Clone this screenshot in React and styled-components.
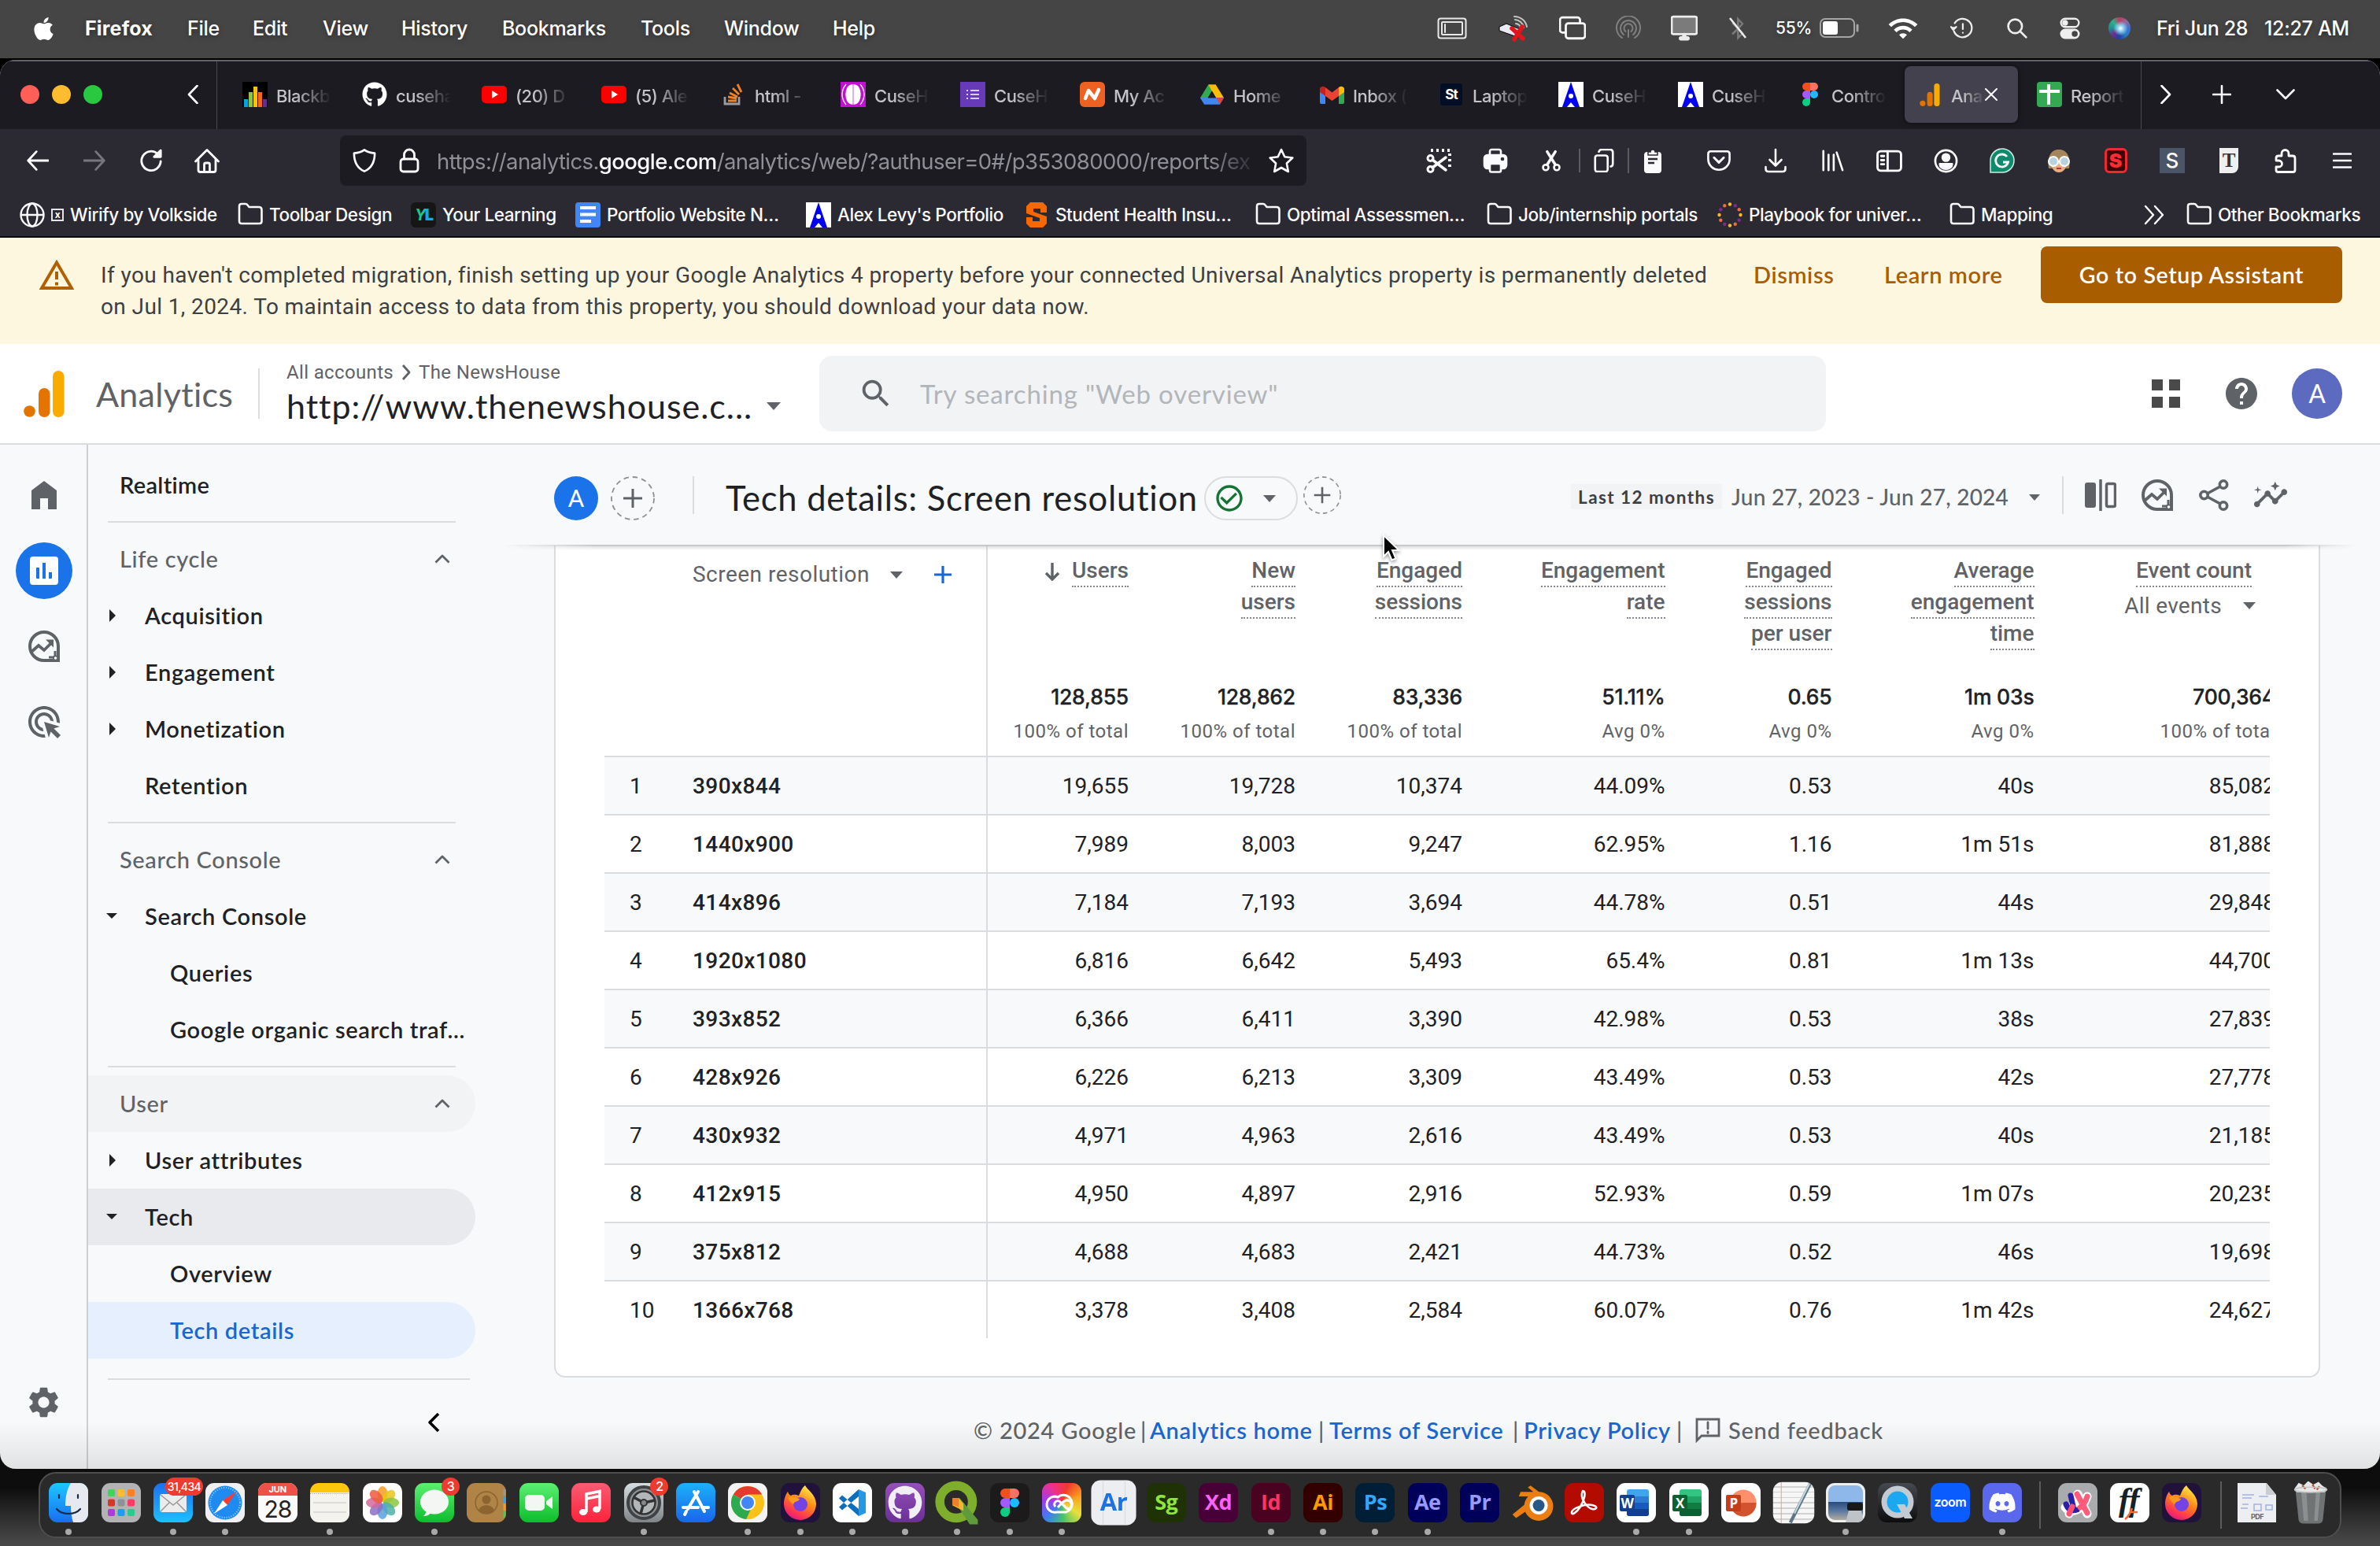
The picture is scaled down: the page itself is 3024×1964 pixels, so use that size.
import React from "react";
import styled, { createGlobalStyle, css } from "styled-components";
import { FaApple, FaGithub, FaDiscord, FaBluetoothB } from "react-icons/fa";
import { MdSearch, MdHelp, MdSettings, MdAdsClick, MdInsights, MdCheckCircleOutline, MdWifi } from "react-icons/md";

const UI = `Inter, "Liberation Sans", sans-serif`;
const GOOGLE = `Lato, "Open Sans", sans-serif`;
const ROBOTO = `Roboto, "Liberation Sans", sans-serif`;

const GlobalStyle = createGlobalStyle`
  * { box-sizing: border-box; }
  body { margin: 0; background: #0b0b0b; font-family: ${ROBOTO}; overflow: hidden; }
  svg { display: block; flex: none; }
`;

/* ---------- shell ---------- */
const Screen = styled.div`
  position: relative;
  width: 3024px;
  height: 1964px;
  display: flex;
  flex-direction: column;
  background: linear-gradient(#000 0, #000 90px, #0d0d0d 1890px, #2c2c2c 1925px, #484848 1960px);
  overflow: hidden;
`;
const Browser = styled.div`
  height: 1790px;
  flex: none;
  display: flex;
  flex-direction: column;
  border-radius: 20px;
  overflow: hidden;
  background: #f8f9fb;
  position: relative;
  &::after {
    content: "";
    position: absolute;
    inset: auto 0 0 0;
    height: 60px;
    background: linear-gradient(transparent, rgba(60, 70, 60, 0.13));
    pointer-events: none;
  }
`;
const Row = styled.div`
  display: flex;
  align-items: center;
  gap: ${(p) => p.$gap || 0}px;
`;
const Spacer = styled.div`
  flex: ${(p) => (p.$w ? "none" : 1)};
  width: ${(p) => p.$w || 0}px;
`;

/* ---------- mac menu bar ---------- */
const MenuBar = styled.header`
  height: 76px;
  flex: none;
  display: flex;
  align-items: center;
  padding: 0 33px 2px 39px;
  background: #454545;
  border-bottom: 2px solid #000;
  color: #fff;
  font: 500 25px/30px ${UI};
  letter-spacing: -0.3px;
  text-shadow: 0 2px 6px rgba(0, 0, 0, 0.35);
`;
const MenuItem = styled.span`
  flex: none;
  width: ${(p) => p.$w}px;
  white-space: nowrap;
  font-weight: ${(p) => (p.$bold ? 700 : 500)};
  letter-spacing: ${(p) => (p.$bold ? 0.2 : -0.3)}px;
`;
const StatusSlot = styled.span`
  flex: none;
  width: ${(p) => p.$w}px;
  display: flex;
  justify-content: center;
`;
const BatteryText = styled.span`
  font-size: 21px;
  width: 56px;
  letter-spacing: -0.2px;
`;
const Siri = styled.span`
  width: 28px;
  height: 28px;
  border-radius: 50%;
  background: radial-gradient(circle at 55% 50%, #fff 0, #8fd0f0 18%, transparent 45%),
    conic-gradient(#c03a62, #8f6aa0, #3b6fd8, #2a7fc0, #2340a0, #6a2f90, #1f8f90, #2fae8c, #c03a62);
`;

const MENU = [["Firefox", 130, true], ["File", 83], ["Edit", 89], ["View", 100], ["History", 128], ["Bookmarks", 176], ["Tools", 106], ["Window", 138], ["Help", 60]];

const Glyph = ({ s = 32, w, h, vb = "0 0 32 32", c = "#fbfbfe", sw = 2.6, fill = "none", children }) => (
  <svg width={w || s} height={h || s} viewBox={vb} fill={fill} stroke={c} strokeWidth={sw} strokeLinecap="round" strokeLinejoin="round">{children}</svg>
);

function MacMenu() {
  return (
    <MenuBar>
      <FaApple size={33} color="#fff" />
      <Spacer $w={36} />
      {MENU.map(([t, w, b]) => <MenuItem key={t} $w={w} $bold={b}>{t}</MenuItem>)}
      <Spacer />
      <StatusSlot $w={76}>
        <Glyph w={38} h={28} vb="0 0 38 28" c="#e8e8e8" sw={2}>
          <rect x="1.5" y="1.500" width="35" height="25" rx="3" /><rect x="6" y="6" width="26" height="16" rx="1" /><path d="M10 9v10" />
        </Glyph>
      </StatusSlot>
      <StatusSlot $w={80}>
        <Glyph s={38} vb="0 0 38 34" c="#ddd" sw={2}>
          <path d="M1 15l9-4 17 7-2 11-7-3-17-6z" fill="#e8eaf4" stroke="#111" strokeWidth="1.200" />
          <path d="M22 11a7 7 0 0 1 6 5M21 6a12 12 0 0 1 11 10M20 2a16 16 0 0 1 16 13" stroke="#c4c4c4" />
          <path d="M17 17l14 13M30 15L20 31" stroke="#e0161c" strokeWidth="5.500" />
        </Glyph>
      </StatusSlot>
      <StatusSlot $w={70}>
        <Glyph s={34} sw={2.6}><path d="M8 21H4a3 3 0 0 1-3-3V6a3 3 0 0 1 3-3h18a3 3 0 0 1 3 3v3" /><rect x="8" y="10" width="23" height="18" rx="3" /></Glyph>
      </StatusSlot>
      <StatusSlot $w={72}>
        <Glyph s={32} c="#7f7f7f" sw={2}><path d="M8 28a15 15 0 1 1 16 0M10 24a10 10 0 1 1 12 0M12.500 20a5.500 5.500 0 1 1 7 0M16 18v9" /></Glyph>
      </StatusSlot>
      <StatusSlot $w={70}>
        <Glyph s={34} sw={2.6} c="#ececec"><rect x="1" y="2" width="30" height="21" rx="2" fill="#7b7b7b" /><path d="M12 28h8M16 24v4" strokeWidth="5" /></Glyph>
      </StatusSlot>
      <StatusSlot $w={66}>
        <svg width="26" height="32" viewBox="0 0 26 32"><FaBluetoothB size={30} x={-2} y={1} color="#7b7b7b" /><path d="M3 3l20 25" stroke="#eee" strokeWidth="2.500" /></svg>
      </StatusSlot>
      <Spacer $w={15} />
      <BatteryText>55%</BatteryText>
      <Glyph w={50} h={26} vb="0 0 50 26" c="#a5a5a5" sw={2}>
        <rect x="1" y="1" width="43" height="23" rx="6" /><rect x="4" y="4" width="19" height="17" rx="3" fill="#fff" stroke="none" /><path d="M48 9v7" strokeWidth="3" />
      </Glyph>
      <StatusSlot $w={112}><MdWifi size={40} color="#fff" /></StatusSlot>
      <StatusSlot $w={38}>
        <Glyph s={30} sw={2.4} c="#eee"><path d="M5 20A12.500 12.500 0 1 0 6 9" /><path d="M1 14l3 4 4-4" fill="#eee" /><path d="M17 10v7M17 22v0" /></Glyph>
      </StatusSlot>
      <StatusSlot $w={102}>
        <Glyph s={28} sw={3} c="#eee"><circle cx="13" cy="13" r="10" /><path d="M20 20l9 9" /></Glyph>
      </StatusSlot>
      <StatusSlot $w={32}>
        <Glyph s={28} sw={2.6} c="#eee"><rect x="3" y="2" width="26" height="12" rx="6" /><circle cx="9" cy="8" r="3" fill="#eee" /><rect x="3" y="18" width="26" height="12" rx="6" fill="#eee" /><circle cx="23" cy="24" r="3" fill="#444" stroke="#444" /></Glyph>
      </StatusSlot>
      <StatusSlot $w={94}><Siri /></StatusSlot>
      <MenuItem $w={137}>Fri Jun 28</MenuItem>
      <MenuItem $w={114}>12:27 AM</MenuItem>
    </MenuBar>
  );
}

/* ---------- tab strip ---------- */
const TabStrip = styled.div`
  height: 88px;
  flex: none;
  display: flex;
  align-items: center;
  background: #1c1b22;
  border-top: 2px solid #62626a;
  padding-bottom: 2px;
`;
const Light = styled.span`
  width: 24px;
  height: 24px;
  border-radius: 50%;
  background: ${(p) => p.$c};
`;
const Lights = styled(Row)`
  width: 212px;
  padding-left: 26px;
`;
const TabRule = styled.span`
  width: 1px;
  align-self: stretch;
  margin-bottom: -2px;
  background: #4a4950;
`;
const Tab = styled.div`
  width: 144px;
  height: 72px;
  margin: 0 4px;
  padding-left: 16px;
  display: flex;
  align-items: center;
  border-radius: 8px;
  flex: none;
  ${(p) => p.$active && css`
    background: #42414d;
    box-shadow: 0 0 6px rgba(0, 0, 0, 0.6);
  `}
`;
const TabText = styled.span`
  width: ${(p) => p.$w || 70}px;
  margin-left: 11px;
  padding-top: 4px;
  overflow: hidden;
  white-space: nowrap;
  font: 500 22px/32px ${UI};
  letter-spacing: -0.5px;
  color: #c4c4c8;
  mask-image: linear-gradient(90deg, #000 35%, transparent 100%);
`;
const Fav = styled.span`
  width: 32px;
  height: 32px;
  flex: none;
  display: flex;
  align-items: center;
  justify-content: center;
  background: ${(p) => p.$bg || "none"};
  border-radius: ${(p) => p.$r || 0}px;
  color: ${(p) => p.$c || "#fff"};
  font: 700 ${(p) => p.$fs || 16}px/32px ${UI};
`;
const StBox = styled(Fav)`
  width: 28px;
  height: 28px;
  letter-spacing: -1px;
`;
const YlText = styled.span`
  letter-spacing: -2px;
  font-style: italic;
  b { font-style: normal; color: #12a9e8; }
`;

const AMark = () => (
  <Fav $bg="#fff">
    <svg width="32" height="32" viewBox="0 0 32 32"><path d="M16 0L27 32h-6l-5-6-5 6H5z" fill="#0000f5" /><circle cx="16" cy="18" r="3" fill="#fff" /></svg>
  </Fav>
);
const YouTube = () => (
  <svg width="32" height="32" viewBox="0 0 32 32"><rect y="5" width="32" height="22" rx="5" fill="#f00" /><path d="M13 11l8 5-8 5z" fill="#fff" /></svg>
);
const GaMark = ({ w, h }) => (
  <svg width={w} height={h} viewBox="0 0 52 59">
    <circle cx="7.500" cy="51.500" r="7.300" fill="#e37400" /><rect x="19" y="22" width="14.500" height="37" rx="7.250" fill="#e37400" /><rect x="37" y="0" width="14.500" height="59" rx="7.250" fill="#f9ab00" />
  </svg>
);
const FigmaMark = ({ w, h }) => (
  <svg width={w} height={h} viewBox="0 0 20 30">
    <path d="M5 0h5v10H5A5 5 0 0 1 5 0z" fill="#f24e1e" /><path d="M10 0h5a5 5 0 0 1 0 10h-5z" fill="#ff7262" /><path d="M5 10h5v10H5a5 5 0 0 1 0-10z" fill="#a259ff" /><circle cx="15" cy="15" r="5" fill="#1abcfe" /><path d="M5 20h5v5a5 5 0 1 1-5-5z" fill="#0acf83" />
  </svg>
);

const TABS = [
  ["Blackb", <Fav $bg="#000" key="a"><svg width="32" height="32" viewBox="0 0 32 32"><rect x="2" y="22" width="5" height="10" fill="#00a4e4" /><rect x="8" y="13" width="5" height="19" fill="#8cc63f" /><rect x="14" y="6" width="5" height="26" fill="#fdc010" /><rect x="20" y="13" width="5" height="19" fill="#f26522" /><rect x="26" y="22" width="5" height="10" fill="#662d91" /></svg></Fav>],
  ["cuseha", <Fav key="a"><FaGithub size={32} /></Fav>],
  ["(20) D", <YouTube key="a" />],
  ["(5) Ale", <YouTube key="a" />],
  ["html -", <Fav key="a" $c="#f48024"><svg width="26" height="28" viewBox="0 0 26 28" strokeWidth="2.800" fill="none"><path d="M2 17v9h18v-9" stroke="#9c9ca0" /><path d="M6 22h11M6 17l11 2M8 12l10 5M12 6l8 8M18 1l5 10" stroke="#f48024" /></svg></Fav>],
  ["CuseH", <Fav key="a" $bg="#c30fd4"><svg width="32" height="32" viewBox="0 0 32 32" fill="none" stroke="#fff" strokeWidth="1.300"><path d="M15 4c-5 0-8 5-8 12s3 12 8 12zM17 4c5 0 8 5 8 12s-3 12-8 12z" fill="#fff" /><path d="M7 3C3 8 2 12 2 16s1 8 5 13M25 3c4 5 5 9 5 13s-1 8-5 13" /></svg></Fav>],
  ["CuseH", <Fav key="a" $bg="#673ab7"><svg width="16" height="14" viewBox="0 0 16 14" stroke="#fff" strokeWidth="1.600"><path d="M0 2h2M0 7h2M0 12h2M5 2h11M5 7h11M5 12h11" /></svg></Fav>],
  ["My Ac", <Fav key="a" $bg="#ee6123" $r={6}><svg width="24" height="18" viewBox="0 0 24 18" fill="none" stroke="#fff" strokeWidth="4.500" strokeLinecap="round" strokeLinejoin="round"><path d="M3 14L7 4l8 10 5-11" /></svg></Fav>],
  ["Home", <Fav key="a"><svg width="30" height="27" viewBox="0 0 32 28"><path d="M11 0h10L5.500 26 0 18z" fill="#34a853" /><path d="M11 0h10l11 18H21z" fill="#fbbc04" /><path d="M0 18h32l-5.500 9h-21z" fill="#4285f4" /><path d="M22 18h10l-5.500 9z" fill="#ea4335" /><path d="M16 9l-5.500 9h11z" fill="#1c1b22" /></svg></Fav>],
  ["Inbox (", <Fav key="a"><svg width="31" height="23" viewBox="0 0 31 23"><path d="M0 3v18q0 2 2 2h5V8z" fill="#4285f4" /><path d="M31 3v18q0 2-2 2h-5V8z" fill="#34a853" /><path d="M24 2q4-3 7 1v5l-7 5z" fill="#fbbc04" /><path d="M7 2q-4-3-7 1v5l7 5z" fill="#c5221f" /><path d="M7 2l8.500 6.500L24 2v11l-8.500 6L7 13z" fill="#ea4335" /></svg></Fav>],
  ["Laptop", <Fav key="a"><StBox $bg="#010f26" $r={4} $fs={17}>St</StBox></Fav>],
  ["CuseH", <AMark key="a" />],
  ["CuseH", <AMark key="a" />],
  ["Contro", <Fav key="a"><FigmaMark w={20} h={30} /></Fav>],
  ["Ana", <Fav key="a"><GaMark w={26} h={29} /></Fav>],
  ["Report", <Fav key="a" $bg="#34a853" $r={4}><svg width="26" height="28" viewBox="0 0 26 28" stroke="#fff" strokeWidth="4"><path d="M0 10h26M12 1v26" /></svg></Fav>],
];

function Tabs() {
  return (
    <TabStrip>
      <Lights $gap={16}><Light $c="#ff5f57" /><Light $c="#febc2e" /><Light $c="#28c840" /></Lights>
      <Spacer $w={26} />
      <Glyph w={14} h={24} vb="0 0 14 24"><path d="M12.500 1L2 12l10.500 11" /></Glyph>
      <Spacer $w={23} />
      <TabRule />
      <Spacer $w={12} />
      {TABS.map(([t, icon], i) => (
        <Tab key={i} $active={t === "Ana"}>
          {icon}
          <TabText $w={t === "Ana" ? 43 : 70}>{t}</TabText>
          {t === "Ana" && <Glyph s={16} vb="0 0 16 16" sw={2}><path d="M1 1l14 14M15 1L1 15" /></Glyph>}
        </Tab>
      ))}
      <TabRule />
      <Spacer $w={24} />
      <Glyph w={14} h={24} vb="0 0 14 24"><path d="M1.500 1L12 12 1.500 23" /></Glyph>
      <Spacer $w={52} />
      <Glyph s={24} vb="0 0 24 24"><path d="M12 1v22M1 12h22" /></Glyph>
      <Spacer $w={57} />
      <Glyph w={24} h={14} vb="0 0 24 14"><path d="M1.500 1.500L12 12 22.500 1.500" /></Glyph>
    </TabStrip>
  );
}

/* ---------- navigation toolbar ---------- */
const Toolbar = styled.div`
  height: 80px;
  flex: none;
  display: flex;
  align-items: center;
  padding-left: 12px;
  background: #2b2a33;
`;
const ToolSlot = styled.span`
  width: ${(p) => p.$w || 72}px;
  flex: none;
  display: flex;
  justify-content: center;
  ${(p) => p.$rule && css`border-left: 2px solid #5b5a63;`}
`;
const UrlBox = styled.div`
  width: 1228px;
  height: 64px;
  display: flex;
  align-items: center;
  flex: none;
  border-radius: 8px;
  background: #1c1b22;
  padding: 0 16px;
`;
const UrlText = styled.span`
  flex: 1;
  margin: 0 12px 0 22px;
  padding-top: 2px;
  overflow: hidden;
  white-space: nowrap;
  font: 400 27.500px/40px ${UI};
  letter-spacing: -0.58px;
  color: #8f8f96;
  mask-image: linear-gradient(90deg, #000 94%, transparent 100%);
  b { color: #fbfbfe; font-weight: 500; }
`;
const Square = styled.span`
  width: ${(p) => p.$w || 32}px;
  height: 32px;
  display: flex;
  align-items: center;
  justify-content: center;
  background: ${(p) => p.$bg};
  border: ${(p) => p.$bd || "none"};
  border-radius: ${(p) => p.$r || 0};
  color: ${(p) => p.$c};
  font: ${(p) => p.$font};
`;

function NavBar() {
  return (
    <Toolbar>
      <ToolSlot><Glyph s={28} sw={3.2}><path d="M31 16H2M14 3L2 16l12 13" /></Glyph></ToolSlot>
      <ToolSlot><Glyph s={28} sw={3.2} c="#77767d"><path d="M1 16h29M18 3l12 13-12 13" /></Glyph></ToolSlot>
      <ToolSlot><Glyph s={30} sw={3}><path d="M29 17a13 13 0 1 1-4-10" /><path d="M29 2v9h-9z" fill="#fbfbfe" /></Glyph></ToolSlot>
      <ToolSlot $w={70}><Glyph s={32} sw={2.8}><path d="M1.500 17L16 2.500 30.500 17M5 14v14q0 2.500 2.500 2.500h17Q27 30.500 27 28V14M12.500 30V21q0-2 2-2h3q2 0 2 2v9" /></Glyph></ToolSlot>
      <Spacer $w={134} />
      <UrlBox>
        <Glyph w={30} h={32} sw={2.800}><path d="M16 1.500c4 3 8 4 14 4.500 0 11-4 20-14 24.500C6 26 2 17 2 6c6-.5 10-1.500 14-4.500z" /></Glyph>
        <Spacer $w={29} />
        <Glyph w={26} h={32} vb="0 0 26 32" sw={2.800}><rect x="2" y="14" width="22" height="16" rx="3.500" /><path d="M6.500 14V8.500a6.500 6.500 0 0 1 13 0V14" /></Glyph>
        <UrlText>https://analytics.<b>google.com</b>/analytics/web/?authuser=0#/p353080000/reports/ex</UrlText>
        <Glyph s={32} sw={2.600}><path d="M16 2l4.300 9.200 10 1.300-7.400 7 1.900 10.500-8.800-5-8.800 5L9.100 19.500l-7.400-7 10-1.300z" /></Glyph>
      </UrlBox>
      <Spacer $w={132} />
      <ToolSlot><Glyph s={32} sw={3}><path d="M6 3h24v24" strokeDasharray="3 4" strokeLinecap="butt" strokeWidth="4" /><circle cx="5.500" cy="13" r="3.500" /><circle cx="5.500" cy="27" r="3.500" /><path d="M8 15l17 13M8 25L25 12" strokeWidth="3.500" /></Glyph></ToolSlot>
      <ToolSlot><Glyph s={32} sw={2.600}><rect x="2" y="9" width="28" height="17" rx="4" fill="#fbfbfe" /><path d="M9 9V4.500Q9 2 11.500 2h9Q23 2 23 4.500V9" /><rect x="9" y="20" width="14" height="10.500" rx="2" fill="#2b2a33" /><circle cx="25" cy="14" r="1" stroke="#2b2a33" /></Glyph></ToolSlot>
      <ToolSlot $w={70}><Glyph s={28} sw={3}><circle cx="8" cy="26" r="4" /><circle cx="24" cy="26" r="4" /><path d="M10 22L22 3M22 22L10 3" strokeWidth="4" /></Glyph></ToolSlot>
      <ToolSlot $w={62} $rule><Glyph s={30} sw={2.800}><rect x="4" y="9" width="17" height="22" rx="3" /><path d="M9 4q1-3 4-3h11q4 0 4 4v15q0 4-3 4" /></Glyph></ToolSlot>
      <ToolSlot $w={62} $rule><svg width="24" height="32" viewBox="0 0 24 32"><rect x="1" y="5" width="22" height="27" rx="4" fill="#fbfbfe" /><path d="M6 9V5h3a3 3 0 0 1 6 0h3v4z" fill="#fbfbfe" stroke="#2b2a33" strokeWidth="1.500" /><path d="M6 14h12M6 19h8" stroke="#2b2a33" strokeWidth="2.500" /></svg></ToolSlot>
      <Spacer $w={18} />
      <ToolSlot><Glyph s={30} sw={2.800}><path d="M5 3.500h22q3.500 0 3.500 3.500v7a14.500 14.500 0 0 1-29 0V7Q1.500 3.500 5 3.500z" /><path d="M9.500 12l6.500 6.500 6.500-6.500" strokeWidth="3.200" /></Glyph></ToolSlot>
      <ToolSlot><Glyph s={32}><path d="M16 2v20M8.500 15l7.500 7.500 7.500-7.500M3.500 24v2.500q0 3.500 3.500 3.500h18q3.500 0 3.500-3.500V24" /></Glyph></ToolSlot>
      <ToolSlot><Glyph s={30} sw={2.800}><path d="M4 3v26M11 8v21M18 8v21M22 5l8 24" /></Glyph></ToolSlot>
      <ToolSlot><Glyph s={33} sw={2.800}><rect x="1.500" y="4" width="29" height="24" rx="4" /><path d="M14 4v24M6 10h3.500M6 15h3.500M6 20h3.500" /></Glyph></ToolSlot>
      <ToolSlot><Glyph s={31} sw={2.800}><circle cx="16" cy="16" r="14" /><circle cx="16" cy="11.500" r="4.500" fill="#fbfbfe" /><path d="M8 20h16c0 4-3.500 6.500-8 6.500S8 24 8 20z" fill="#fbfbfe" /></Glyph></ToolSlot>
      <ToolSlot><svg width="32" height="32" viewBox="0 0 32 32"><path d="M16 1a15 15 0 1 1 0 30H1V16A15 15 0 0 1 16 1z" fill="#0f8a6c" stroke="#cfeee5" strokeWidth="1.500" /><path d="M22 11a8 8 0 1 0 1.500 7H17" fill="none" stroke="#fff" strokeWidth="2.800" /></svg></ToolSlot>
      <ToolSlot><svg width="32" height="32" viewBox="0 0 32 32"><path d="M3 26c-2-14 2-24 13-24s15 10 13 24z" fill="#a5855c" /><ellipse cx="16" cy="19" rx="10" ry="12" fill="#e8ab84" /><path d="M4 15C6 6 12 8 19 6c5 1 8 5 9 9z" fill="#a5855c" /><circle cx="9" cy="17" r="6" fill="#b9d3dc" stroke="#fff" strokeWidth="2" /><circle cx="23" cy="17" r="6" fill="#b9d3dc" stroke="#fff" strokeWidth="2" /><path d="M13 26h6" stroke="#b03a3a" strokeWidth="2" /></svg></ToolSlot>
      <ToolSlot><Square $w={29} $bg="#3d0205" $bd="3px solid #ee2a30" $r="6px" $c="#ff2d33" $font={`900 25px/26px ${UI}`}>S</Square></ToolSlot>
      <ToolSlot><Square $bg="#4b5568" $c="#fff" $font={`500 26px/32px ${UI}`}>S</Square></ToolSlot>
      <ToolSlot><Square $w={24} $bg="#efefef" $r="0 0 8px 0" $c="#333" $font={`700 25px/32px "Liberation Serif", serif`}>T</Square></ToolSlot>
      <ToolSlot><Glyph s={32} sw={2.800}><path d="M4 16V13q0-3 3-3h4V7a4.500 4.500 0 0 1 9 0v3h5q3 0 3 3v15q0 2.500-2.500 2.500H6.500Q4 30.500 4 28v-4h3.500a4 4 0 0 0 0-8z" /></Glyph></ToolSlot>
      <ToolSlot><Glyph s={24} vb="0 0 24 24"><path d="M1 3.500h22M1 12h22M1 20.500h22" /></Glyph></ToolSlot>
    </Toolbar>
  );
}

/* ---------- bookmarks ---------- */
const BookmarkBar = styled.div`
  height: 58px;
  flex: none;
  display: flex;
  align-items: flex-start;
  padding: 13px 0 0 25px;
  background: #2b2a33;
  border-bottom: 2px solid #0c0c0d;
`;
const Bookmark = styled.div`
  width: ${(p) => p.$w}px;
  flex: none;
  display: flex;
  align-items: center;
  gap: 8px;
  white-space: nowrap;
  color: #fbfbfe;
  font: 500 22.500px/32px ${UI};
  letter-spacing: -0.42px;
`;
const Folder = () => (
  <Glyph s={32} sw={2.600}><path d="M2 5q0-3 3-3h5q1.500 0 2.500 1.500L14.500 6H27q3.500 0 3.500 3.500V24q0 3-3 3H5q-3 0-3-3z" /></Glyph>
);
const BoxX = styled.span`
  width: 16px;
  height: 16px;
  border: 2px solid #e4e4e8;
  font: 700 12px/11px ${UI};
  text-align: center;
`;
const BOOKMARKS = [
  [277, "Wirify by Volkside", <Glyph key="i" s={32} sw={2.400}><circle cx="16" cy="16" r="14.500" /><ellipse cx="16" cy="16" rx="6.500" ry="14.500" /><path d="M2 16h28" /></Glyph>, true],
  [220, "Toolbar Design", <Folder key="i" />],
  [209, "Your Learning", <Fav key="i" $bg="#161616" $r={6} $c="#14c98f" $fs={20}><YlText>Y<b>L</b></YlText></Fav>],
  [293, "Portfolio Website N…", <Fav key="i" $bg="#4285f4" $r={4}><svg width="20" height="22" viewBox="0 0 20 22" stroke="#fff" strokeWidth="4"><path d="M0 2h20M0 10.500h20M0 19h14" /></svg></Fav>],
  [277, "Alex Levy's Portfolio", <AMark key="i" />],
  [294, "Student Health Insu…", <Fav key="i"><svg width="26" height="32" viewBox="0 0 26 32"><path d="M5 0h16l5 5v8h-8V8H9v4l17 6v9l-5 5H5l-5-5v-8h8v5h9v-4L0 14V5z" fill="#f76900" /></svg></Fav>],
  [294, "Optimal Assessmen…", <Folder key="i" />],
  [293, "Job/internship portals", <Folder key="i" />],
  [295, "Playbook for univer…", <svg key="i" width="32" height="32" viewBox="0 0 32 32">{[...Array(12)].map((_, k) => <circle key={k} cx={16 + 13.500 * Math.sin((k * Math.PI) / 6)} cy={16 - 13.500 * Math.cos((k * Math.PI) / 6)} r="2.200" fill={["#fdb827", "#7b2d8b", "#f26a3d"][k % 3]} />)}</svg>],
  [245, "Mapping", <Folder key="i" />],
];
function Bookmarks() {
  return (
    <BookmarkBar>
      {BOOKMARKS.map(([w, t, icon, box]) => (
        <Bookmark key={t} $w={w}>{icon}{box && <BoxX>x</BoxX>}{t}</Bookmark>
      ))}
      <Row>
        <Spacer $w={2} />
        <Glyph w={26} h={26} vb="0 0 26 26" sw={2.400}><path d="M2 2l10 11L2 24M14 2l10 11-10 11" /></Glyph>
        <Spacer $w={28} />
        <Bookmark $w={230}><Folder />Other Bookmarks</Bookmark>
      </Row>
    </BookmarkBar>
  );
}

/* ---------- notice ---------- */
const Notice = styled.section`
  height: 135px;
  flex: none;
  display: flex;
  align-items: flex-start;
  padding: 11px 48px 0 50px;
  background: #fef7e0;
  font: 400 28px/40px ${ROBOTO};
  color: #3c4043;
`;
const NoticeText = styled.p`
  margin: 17px 0 0 34px;
  width: 2100px;
  letter-spacing: 0.39px;
`;
const NoticeLink = styled.a`
  margin-top: 16px;
  width: ${(p) => p.$w}px;
  font: 600 29px/40px ${GOOGLE};
  letter-spacing: 0.6px;
  color: #a85e00;
`;
const NoticeButton = styled.button`
  width: 383px;
  height: 72px;
  border: 0;
  border-radius: 8px;
  background: #a85d00;
  color: #fff;
  font: 600 28.500px/40px ${GOOGLE};
  letter-spacing: 0.65px;
`;

/* ---------- analytics header ---------- */
const AppHeader = styled.header`
  height: 128px;
  flex: none;
  display: flex;
  align-items: center;
  padding: 0 48px 0 30px;
  background: #fff;
  border-bottom: 2px solid #dadce0;
`;
const Brand = styled.span`
  width: 206px;
  margin-left: 40px;
  padding-top: 2px;
  font: 400 43px/50px ${GOOGLE};
  letter-spacing: 0.3px;
  color: #5f6368;
`;
const VRule = styled.span`
  width: 2px;
  height: ${(p) => p.$h}px;
  flex: none;
  background: #dadce0;
`;
const Property = styled.div`
  width: 593px;
  margin-left: 34px;
  white-space: nowrap;
`;
const Crumbs = styled.div`
  display: flex;
  align-items: center;
  gap: 10px;
  font: 400 24px/32px ${ROBOTO};
  letter-spacing: 0.35px;
  color: #5f6368;
`;
const PropertyName = styled.div`
  font: 400 43px/54px ${GOOGLE};
  letter-spacing: 0.98px;
  color: #202124;
`;
const Caret = styled.span`
  flex: none;
  width: 0;
  height: 0;
  border: ${(p) => p.$s || 8}px solid transparent;
  border-bottom: 0;
  border-top: ${(p) => (p.$s || 8) + 1}px solid ${(p) => p.$c || "#5f6368"};
`;
const SearchBox = styled.div`
  width: 1279px;
  height: 96px;
  display: flex;
  align-items: center;
  border-radius: 16px;
  background: #f1f3f4;
  padding-left: 49px;
  gap: 45px;
  font: 400 33px/40px ${GOOGLE};
  letter-spacing: 0.85px;
  color: #b2b5b9;
`;
const Apps = styled.div`
  display: grid;
  grid-template-columns: 14px 14px;
  gap: 8px;
  i { height: 14px; background: #4a4a4a; }
`;
const Avatar = styled.span`
  width: ${(p) => p.$s}px;
  height: ${(p) => p.$s}px;
  border-radius: 50%;
  background: ${(p) => p.$bg};
  color: #fff;
  font: 400 ${(p) => p.$fs}px/${(p) => p.$s}px ${ROBOTO};
  text-align: center;
`;

function Header() {
  return (
    <AppHeader>
      <GaMark w={52} h={59} />
      <Brand>Analytics</Brand>
      <VRule $h={64} />
      <Property>
        <Crumbs>All accounts<Glyph w={12} h={20} vb="0 0 12 20" c="#5f6368" sw={2.800}><path d="M2 1l8 9-8 9" strokeLinecap="butt" /></Glyph>The NewsHouse</Crumbs>
        <PropertyName>http://www.thenewshouse.c...</PropertyName>
      </Property>
      <Spacer $w={17} />
      <Caret $s={9} style={{ marginTop: 32 }} />
      <Spacer $w={49} />
      <SearchBox><MdSearch size={46} color="#5f6368" style={{ marginRight: -12 }} /><span>Try searching "Web overview"</span></SearchBox>
      <Spacer />
      <Apps><i /><i /><i /><i /></Apps>
      <Spacer $w={54} />
      <MdHelp size={48} color="#5f6368" />
      <Spacer $w={40} />
      <Avatar $s={64} $bg="#5c6bc0" $fs={34}>A</Avatar>
    </AppHeader>
  );
}

/* ---------- left rail and navigation ---------- */
const Body = styled.div`
  flex: 1;
  display: flex;
  min-height: 0;
`;
const Rail = styled.nav`
  width: 112px;
  flex: none;
  display: flex;
  flex-direction: column;
  align-items: center;
  padding: 16px 0 37px 1px;
  border-right: 2px solid #cdcfd3;
`;
const RailButton = styled.span`
  width: 72px;
  height: 72px;
  margin: 12px 0;
  border-radius: 50%;
  display: flex;
  align-items: center;
  justify-content: center;
  background: ${(p) => (p.$active ? "#1a73e8" : "none")};
`;
const Explore = ({ s = 40 }) => (
  <svg width={s} height={s} viewBox="0 0 40 40" fill="none" stroke="#5f6368" strokeWidth="4">
    <path d="M38 20v18H20A18 18 0 1 1 38 20z" /><path d="M4 27l9-8 7 6 10-10" strokeWidth="3.800" /><path d="M22 11.500h10v10z" fill="#5f6368" stroke="none" /><circle cx="34.500" cy="35" r="3.500" fill="#5f6368" stroke="none" /><path d="M34 26v8h-8" strokeWidth="3" /><circle cx="34.500" cy="35" r="1.800" fill="#fff" stroke="none" />
  </svg>
);
const Nav = styled.nav`
  width: 528px;
  flex: none;
  padding-top: 15px;
`;
const NavRow = styled.div`
  width: 492px;
  height: 72px;
  padding-left: ${(p) => [40, 25, 104][p.$level]}px;
  padding-bottom: 1px;
  display: flex;
  align-items: center;
  white-space: nowrap;
  border-radius: 0 36px 36px 0;
  font: ${(p) => (p.$section ? 500 : 600)} 29px/40px ${GOOGLE};
  letter-spacing: ${(p) => (p.$level === 0 && !p.$section ? 0.3 : 0.65)}px;
  color: ${(p) => (p.$section ? "#5f6368" : "#202124")};
  ${(p) => p.$tone === "soft" && css`background: #f1f3f4;`}
  ${(p) => p.$tone === "open" && css`background: #e8eaed;`}
  ${(p) => p.$tone === "active" && css`background: #e6effd; color: #1967d2;`}
`;
const Twisty = styled.span`
  width: ${(p) => (p.$open ? 50 : 47)}px;
  margin-left: ${(p) => (p.$open ? -3 : 0)}px;
  display: flex;
`;
const NavRule = styled.div`
  width: ${(p) => p.$w || 442}px;
  height: 2px;
  margin: ${(p) => p.$m || 10}px 0 10px 25px;
  background: #dadce0;
`;
const Collapse = styled.div`
  display: flex;
  padding: 31px 0 0 431px;
`;
const Up = () => <Glyph w={20} h={12} vb="0 0 20 12" c="#5f6368" sw={2.800}><path d="M1.500 10.500L10 2l8.500 8.500" strokeLinecap="butt" /></Glyph>;

const Section = ({ label, tone }) => (
  <NavRow $level={0} $section $tone={tone}>{label}<Spacer /><Up /><Spacer $w={32} /></NavRow>
);
const Group = ({ label, open, leaf, tone }) => (
  <NavRow $level={1} $tone={tone}>
    <Twisty $open={open}>
      {!leaf && (open
        ? <svg width="16" height="8"><path d="M1 0h14L8 7z" fill="#202124" /></svg>
        : <svg width="10" height="16"><path d="M2 0v16l8-8z" fill="#202124" /></svg>)}
    </Twisty>
    {label}
  </NavRow>
);
const Leaf = ({ label, tone }) => <NavRow $level={2} $tone={tone}>{label}</NavRow>;

function Sidebar() {
  return (
    <>
      <Rail>
        <RailButton><svg width="32" height="36" viewBox="0 0 32 36"><path d="M16 0l16 12v24H21V22H11v14H0V12z" fill="#5f6368" /></svg></RailButton>
        <RailButton $active><svg width="36" height="36" viewBox="0 0 36 36"><rect width="36" height="36" rx="4" fill="#fff" /><path d="M10 14v14M18 8v20M26 20v8" stroke="#1a73e8" strokeWidth="4" /></svg></RailButton>
        <RailButton><Explore /></RailButton>
        <RailButton><MdAdsClick size={48} color="#5f6368" /></RailButton>
        <Spacer />
        <RailButton><MdSettings size={47} color="#5f6368" /></RailButton>
      </Rail>
      <Nav>
        <NavRow $level={0}>Realtime</NavRow>
        <NavRule />
        <Section label="Life cycle" />
        <Group label="Acquisition" />
        <Group label="Engagement" />
        <Group label="Monetization" />
        <Group label="Retention" leaf />
        <NavRule />
        <Section label="Search Console" />
        <Group label="Search Console" open />
        <Leaf label="Queries" />
        <Leaf label="Google organic search traf..." />
        <NavRule />
        <Section label="User" tone="soft" />
        <Group label="User attributes" />
        <Group label="Tech" open tone="open" />
        <Leaf label="Overview" />
        <Leaf label="Tech details" tone="active" />
        <NavRule $w={460} $m={25} />
        <Collapse><Glyph w={16} h={26} vb="0 0 16 26" c="#000" sw={3.600}><path d="M14 2L3 13l11 11" strokeLinecap="butt" /></Glyph></Collapse>
      </Nav>
    </>
  );
}

/* ---------- report ---------- */
const Main = styled.main`
  flex: 1;
  min-width: 0;
`;
const ReportBar = styled.div`
  position: relative;
  z-index: 1;
  height: 128px;
  display: flex;
  align-items: flex-start;
  padding: 40px 0 0 64px;
  &::after {
    content: "";
    position: absolute;
    left: 0;
    right: 30px;
    bottom: -6px;
    height: 7px;
    background: linear-gradient(#b9bbbd, rgba(190, 192, 195, 0.35) 45%, transparent);
    mask-image: linear-gradient(90deg, transparent, #000 5%, #000 96%, transparent);
  }
`;
const Title = styled.h1`
  width: 608px;
  margin: 0;
  white-space: nowrap;
  font: 400 43.500px/54px ${GOOGLE};
  letter-spacing: 0.74px;
  color: #202124;
`;
const Pill = styled.span`
  width: 119px;
  height: 56px;
  display: flex;
  align-items: center;
  padding-left: 10px;
  gap: 23px;
  border: 2px solid #dadce0;
  border-radius: 28px;
`;
const AddCircle = ({ s }) => (
  <svg width={s} height={s} viewBox="0 0 56 56" fill="none">
    <circle cx="28" cy="28" r="27" stroke="#8b8f94" strokeWidth="1.800" strokeDasharray="6.500 5" /><path d="M28 16v24M16 28h24" stroke="#5f6368" strokeWidth="3" />
  </svg>
);
const Chip = styled.span`
  width: 192px;
  height: 32px;
  margin: 10px 12px 0 0;
  text-align: center;
  white-space: nowrap;
  background: #f1f3f4;
  font: 700 22.500px/33px ${GOOGLE};
  letter-spacing: 1.45px;
  color: #3c4043;
`;
const DateRange = styled.span`
  width: 378px;
  white-space: nowrap;
  font: 500 28px/52px ${GOOGLE};
  letter-spacing: 0.25px;
  color: #5f6368;
`;
const ToolIcon = styled.span`
  width: ${(p) => p.$w || 72}px;
  height: 48px;
  display: flex;
  align-items: center;
  justify-content: center;
`;
const Card = styled.section`
  height: 1057px;
  margin: 0 76px 0 64px;
  padding-left: 62px;
  background: #fff;
  border: 2px solid #dadce0;
  border-top: 0;
  border-radius: 0 0 14px 14px;
`;
const Table = styled.div`
  width: 2116px;
  overflow: hidden;
`;
const grid = css`
  display: grid;
  grid-template-columns: 112px 373px 181px 212px 212px 257.500px 212px 257px 306.500px;
`;
const HeadRow = styled.div`
  ${grid}
  height: 267px;
`;
const TRow = styled.div`
  ${grid}
  height: 74px;
  border-top: 2px solid #dadce0;
  background: ${(p) => (p.$odd ? "#f8f9fb" : "#fff")};
  font: 400 28px/74px ${ROBOTO};
  color: #202124;
`;
const Cell = styled.span`
  text-align: ${(p) => (p.$left ? "left" : "right")};
  white-space: nowrap;
  font-weight: ${(p) => (p.$strong ? 500 : 400)};
  letter-spacing: ${(p) => (p.$strong ? 0.4 : 0)}px;
  padding-left: ${(p) => (p.$index ? 32 : 0)}px;
  border-left: ${(p) => (p.$rule ? "2px solid #dadce0" : "0")};
`;
const HeadCell = styled.div`
  display: flex;
  flex-direction: column;
  align-items: flex-end;
  padding-top: 13px;
  border-left: ${(p) => (p.$rule ? "2px solid #dadce0" : "0")};
  font: 500 28px/37px ${ROBOTO};
  color: #5f6368;
`;
const HeadLines = styled.div`
  height: 161px;
  display: flex;
  flex-direction: column;
  align-items: flex-end;
  white-space: nowrap;
  padding-right: ${(p) => p.$pad || 0}px;
`;
const HeadWord = styled.span`
  height: 40px;
  border-bottom: 2px dotted #85888c;
`;
const Total = styled.span`
  font: 500 26.500px/36px ${UI};
  letter-spacing: -0.2px;
  color: #202124;
  -webkit-text-stroke: 0.3px #202124;
`;
const Share = styled.span`
  margin-top: 9px;
  font: 400 24px/34px ${ROBOTO};
  letter-spacing: 0.5px;
  white-space: nowrap;
`;
const Dimension = styled.div`
  display: flex;
  align-items: center;
  height: 36px;
  margin-top: 19px;
  font: 400 28px/36px ${ROBOTO};
  letter-spacing: 0.48px;
  color: #5f6368;
`;
const AllEvents = styled(Row)`
  margin: 5px -5px 0 0;
  font-weight: 400;
  letter-spacing: 0.3px;
`;

const COLS = [
  { h: ["Users"], total: "128,855", share: "100% of total", sort: true },
  { h: ["New", "users"], total: "128,862", share: "100% of total" },
  { h: ["Engaged", "sessions"], total: "83,336", share: "100% of total" },
  { h: ["Engagement", "rate"], total: "51.11%", share: "Avg 0%" },
  { h: ["Engaged", "sessions", "per user"], total: "0.65", share: "Avg 0%" },
  { h: ["Average", "engagement", "time"], total: "1m 03s", share: "Avg 0%" },
  { h: ["Event count"], total: "700,364", share: "100% of total", events: true },
];
const ROWS = [
  ["390x844", "19,655", "19,728", "10,374", "44.09%", "0.53", "40s", "85,082"],
  ["1440x900", "7,989", "8,003", "9,247", "62.95%", "1.16", "1m 51s", "81,888"],
  ["414x896", "7,184", "7,193", "3,694", "44.78%", "0.51", "44s", "29,848"],
  ["1920x1080", "6,816", "6,642", "5,493", "65.4%", "0.81", "1m 13s", "44,700"],
  ["393x852", "6,366", "6,411", "3,390", "42.98%", "0.53", "38s", "27,839"],
  ["428x926", "6,226", "6,213", "3,309", "43.49%", "0.53", "42s", "27,778"],
  ["430x932", "4,971", "4,963", "2,616", "43.49%", "0.53", "40s", "21,185"],
  ["412x915", "4,950", "4,897", "2,916", "52.93%", "0.59", "1m 07s", "20,235"],
  ["375x812", "4,688", "4,683", "2,421", "44.73%", "0.52", "46s", "19,698"],
  ["1366x768", "3,378", "3,408", "2,584", "60.07%", "0.76", "1m 42s", "24,627"],
];

const Footer = styled.footer`
  display: flex;
  align-items: center;
  height: 133px;
  padding-left: 597px;
  white-space: nowrap;
  font: 500 29px/40px ${GOOGLE};
  letter-spacing: 0.75px;
  color: #5f6368;
  a { color: #1967d2; font-weight: 600; letter-spacing: 0.7px; }
`;
const Seg = styled.span`
  width: ${(p) => p.$w}px;
`;

function Report() {
  return (
    <Main>
      <ReportBar>
        <Avatar $s={56} $bg="#1a73e8" $fs={32}>A</Avatar>
        <Spacer $w={16} />
        <AddCircle s={56} />
        <Spacer $w={48} />
        <VRule $h={48} />
        <Spacer $w={40} />
        <Title>Tech details: Screen resolution</Title>
        <Pill><MdCheckCircleOutline size={40} color="#137333" /><Caret /></Pill>
        <Spacer $w={7} />
        <AddCircle s={48} />
        <Spacer $w={292} />
        <Chip>Last 12 months</Chip>
        <DateRange>Jun 27, 2023 - Jun 27, 2024</DateRange>
        <Caret $s={7.500} style={{ marginTop: 23 }} />
        <Spacer $w={28} />
        <VRule $h={48} />
        <Spacer $w={11} />
        <ToolIcon><svg width="40" height="40" viewBox="0 0 40 40"><rect y="4" width="14" height="32" rx="3" fill="#5f6368" /><path d="M20 0v40" stroke="#5f6368" strokeWidth="3.500" /><rect x="27.500" y="5.500" width="11" height="29" rx="2" fill="none" stroke="#5f6368" strokeWidth="3.500" /></svg></ToolIcon>
        <ToolIcon><Explore /></ToolIcon>
        <ToolIcon><svg width="38" height="40" viewBox="0 0 38 40" fill="none" stroke="#5f6368" strokeWidth="3.600"><circle cx="31" cy="6.500" r="4.700" /><circle cx="31" cy="33.500" r="4.700" /><circle cx="6.500" cy="20" r="4.700" /><path d="M27 9L10.500 18M10.500 22L27 31" /></svg></ToolIcon>
        <ToolIcon><MdInsights size={46} color="#5f6368" /></ToolIcon>
      </ReportBar>
      <Card>
        <Table>
          <HeadRow>
            <span />
            <Dimension>
              Screen resolution<Spacer $w={26} /><Caret /><Spacer $w={39} />
              <Glyph s={24} vb="0 0 24 24" c="#1967d2" sw={3.200}><path d="M12 1v22M1 12h22" strokeLinecap="butt" /></Glyph>
            </Dimension>
            {COLS.map((c, i) => (
              <HeadCell key={i} $rule={i === 0}>
                <HeadLines $pad={c.events ? 30 : 0}>
                  {c.sort ? (
                    <Row $gap={15}><Glyph w={20} h={24} vb="0 0 20 24" c="#5f6368" sw={3.400}><path d="M10 1v21M2 14l8 8 8-8" strokeLinecap="butt" strokeLinejoin="miter" /></Glyph><HeadWord>{c.h[0]}</HeadWord></Row>
                  ) : c.h.map((w) => <HeadWord key={w}>{w}</HeadWord>)}
                  {c.events && <AllEvents $gap={27}>All events<Caret /></AllEvents>}
                </HeadLines>
                <Total>{c.total}</Total>
                <Share>{c.share}</Share>
              </HeadCell>
            ))}
          </HeadRow>
          {ROWS.map((r, i) => (
            <TRow key={r[0]} $odd={i % 2 === 0}>
              <Cell $left $index>{i + 1}</Cell>
              <Cell $left $strong>{r[0]}</Cell>
              {r.slice(1).map((v, k) => <Cell key={k} $rule={k === 0}>{v}</Cell>)}
            </TRow>
          ))}
        </Table>
      </Card>
      <Footer>
        <Seg $w={212}>© 2024 Google</Seg><Seg $w={12}>|</Seg>
        <Seg $w={214}><a>Analytics home</a></Seg><Seg $w={14}>|</Seg>
        <Seg $w={233}><a>Terms of Service</a></Seg><Seg $w={14}>|</Seg>
        <Seg $w={194}><a>Privacy Policy</a></Seg><Seg $w={24}>|</Seg>
        <Glyph s={32} c="#5f6368" sw={2.800}><path d="M2 2h28v21H8l-6 6z" strokeLinejoin="miter" /><path d="M16 6v8M16 18v1.500" /></Glyph>
        <Spacer $w={10} />
        <span>Send feedback</span>
      </Footer>
    </Main>
  );
}

/* ---------- dock ---------- */
const Dock = styled.div`
  width: 2926px;
  height: 84px;
  margin: 4px 0 0 49px;
  flex: none;
  display: flex;
  align-items: flex-start;
  padding: 12px 0 0 3px;
  border: 2px solid #4e4e4e;
  border-radius: 22px;
  background: #2a2a2a;
`;
const DockSlot = styled.div`
  position: relative;
  width: ${(p) => p.$w || 66.42}px;
  flex: none;
  display: flex;
  flex-direction: column;
  align-items: center;
`;
const Tile = styled.div`
  width: 50px;
  height: 50px;
  display: flex;
  align-items: center;
  justify-content: center;
  overflow: hidden;
  border-radius: ${(p) => (p.$flat ? 0 : 11)}px;
  background: ${(p) => p.$bg || "none"};
  color: ${(p) => p.$c || "#fff"};
  font: ${(p) => p.$font || `700 27px/50px "Open Sans", sans-serif`};
  letter-spacing: -0.5px;
  padding-bottom: ${(p) => (p.$text ? 3 : 0)}px;
  transform: scale(${(p) => p.$scale || 1});
`;
const Dot = styled.i`
  width: 8px;
  height: 8px;
  margin-top: 8px;
  border-radius: 50%;
  background: #a9a9a9;
`;
const Badge = styled.b`
  position: absolute;
  top: -7px;
  left: ${(p) => (p.$long ? 23 : 42)}px;
  min-width: 23px;
  height: 23px;
  padding: 0 3px;
  border-radius: 12px;
  background: #ee3b30;
  color: #fff;
  font: 500 ${(p) => (p.$long ? 14 : 16)}px/23px ${UI};
  letter-spacing: -0.6px;
  text-align: center;
`;
const DockRule = styled.span`
  width: 2px;
  height: 60px;
  margin-top: -2px;
  flex: none;
  background: #5c5c5c;
`;
const CalHead = styled.div`
  height: 16px;
  background: #ee5148;
  color: #fff;
  font: 700 11px/17px ${UI};
  letter-spacing: 0;
`;
const Cal = styled.div`
  width: 50px;
  height: 50px;
  text-align: center;
  color: #222;
  font: 400 30px/34px ${UI};
  letter-spacing: -1px;
`;
const S = ({ children }) => <svg width="50" height="50" viewBox="0 0 50 50" fill="none">{children}</svg>;
const FirefoxArt = () => (
  <S>
    <defs><linearGradient id="ff" x1=".8" y1="0" x2=".3" y2="1"><stop offset="0" stopColor="#fff44f" /><stop offset=".45" stopColor="#ff8a16" /><stop offset=".8" stopColor="#ff3750" /><stop offset="1" stopColor="#e31587" /></linearGradient></defs>
    <path d="M31 3c3 6 13 11 14 23a20.500 20.500 0 0 1-41 1C4 20 6 15 9 11c1 3 2 4 4 5 4-2 6-1 10 0 2-5 4-10 8-13z" fill="url(#ff)" />
    <circle cx="25" cy="27" r="9" fill="#7542e5" /><path d="M9 18c6-3 10 1 15 2-1 4-6 2-8 7-3-2-6-5-7-9z" fill="#ff9a1f" />
  </S>
);
const Office = ({ l, a, b, c, d }) => (
  <S>
    <rect x="13" y="8" width="28" height="34" rx="3" fill={a} /><path d="M13 17h28v8H13z" fill={b} /><path d="M13 25h28v8H13z" fill={c} /><path d="M13 33h28v6q0 3-3 3H16q-3 0-3-3z" fill={d} /><rect x="4" y="15" width="19" height="21" rx="2" fill={d} />
    <text x="13.500" y="32" fill="#fff" fontFamily="Open Sans" fontWeight="700" fontSize="17" textAnchor="middle">{l}</text>
  </S>
);

const APPS = [
  { bg: "linear-gradient(#1cc8ff,#1a6df2)", dot: 1, el: <S><path d="M28 0c-5 8-7 18-7 29h7c0 8 1 15 3 21h19V0z" fill="#e6eaf0" /><path d="M13 15v4M37 15v4M10 33c7 8 23 8 30 0" stroke="#182c48" strokeWidth="2.200" strokeLinecap="round" /></S> },
  { bg: "#b3b3b5", el: <S>{["#3dd65b", "#fdbb2d", "#ff7f1f", "#d9342b", "#8d9299", "#ff3b63", "#af3bd6", "#1e9cf2", "#2bc98e"].map((f, i) => <rect key={i} x={8 + (i % 3) * 12.500} y={8 + Math.floor(i / 3) * 12.500} width="9" height="9" rx="2" fill={f} />)}</S> },
  { bg: "linear-gradient(#1d6ff2,#1cc0fc)", badge: "31,434", dot: 1, el: <S><rect x="8" y="14" width="34" height="23" rx="3" fill="#ececec" /><path d="M9 15l16 13 16-13M9 36l11-11M41 36L30 25" stroke="#999" strokeWidth="1.500" /></S> },
  { bg: "#f0f0f2", dot: 1, el: <S><circle cx="25" cy="25" r="21.500" fill="#1f8bf0" /><circle cx="25" cy="25" r="19" stroke="#9fd2fa" strokeWidth="2" strokeDasharray="1 2" /><path d="M39 11L22 22l6 6z" fill="#ff3b30" /><path d="M11 39l11-17 6 6z" fill="#fff" /></S> },
  { bg: "#fafafa", el: <Cal><CalHead>JUN</CalHead>28</Cal> },
  { bg: "linear-gradient(#fdc70c 25%,#f4f3ee 25%)", dot: 1, el: <S><path d="M0 13.500h50" stroke="#b69a4c" strokeDasharray="1 1.500" /><path d="M4 25h42M4 37h42" stroke="#d4d4d2" strokeWidth="1.500" /></S> },
  { bg: "#fff", el: <S>{["#f79d1e", "#e7c619", "#8cc63f", "#4db2a5", "#5aa0dc", "#8c6fc4", "#d06a9c", "#ef5b40"].map((f, i) => <ellipse key={i} cx="25" cy="14" rx="6.500" ry="10" fill={f} opacity=".85" transform={`rotate(${i * 45} 25 25)`} />)}</S> },
  { bg: "linear-gradient(#5cf072,#0cbd2c)", badge: "3", dot: 1, el: <S><ellipse cx="25" cy="24" rx="18" ry="15.500" fill="#f4f6f4" /><path d="M14 34c1 4-1 6-3 8 5 0 8-2 10-5z" fill="#f4f6f4" /></S> },
  { bg: "#b08347", el: <S><circle cx="25" cy="25" r="14" stroke="#8d6430" strokeWidth="1.500" /><circle cx="25" cy="21" r="5.500" fill="#8d6430" /><path d="M15 35c2-9 18-9 20 0-5 5-15 5-20 0z" fill="#8d6430" /><path d="M48 8v8" stroke="#999" strokeWidth="3" /><path d="M48 17v9" stroke="#3aa0f0" strokeWidth="3" /><path d="M48 26v9" stroke="#f59a23" strokeWidth="3" /><path d="M48 35v9" stroke="#4cc85f" strokeWidth="3" /></S> },
  { bg: "linear-gradient(#5cf072,#0cbd2c)", el: <S><rect x="7" y="15" width="25" height="20" rx="5" fill="#f4f6f4" /><path d="M34 23l8-6v16l-8-6z" fill="#f4f6f4" /></S> },
  { bg: "linear-gradient(#fb5b74,#fa233b)", el: <S><path d="M19 37V14l17-3.500V33M19 20l17-3.500" stroke="#fff" strokeWidth="3.500" /><ellipse cx="15" cy="37" rx="5" ry="4" fill="#fff" /><ellipse cx="32" cy="33.500" rx="5" ry="4" fill="#fff" /></S> },
  { bg: "linear-gradient(#d6dde2,#7f8486)", badge: "2", dot: 1, el: <S><circle cx="25" cy="25" r="20" fill="#8e9295" stroke="#3f4345" strokeWidth="4" /><circle cx="25" cy="25" r="14.500" stroke="#333" strokeWidth="2.500" fill="#b3b6b8" /><path d="M25 25L12 18M25 25l14-3M25 25l-4 14" stroke="#333" strokeWidth="3.500" /><circle cx="25" cy="25" r="4" fill="#888" stroke="#333" strokeWidth="2" /></S> },
  { bg: "linear-gradient(#1bb1fa,#1a65ea)", el: <S><path d="M28 11L15 33M23 11l13 25M9 31h19M33 31h8M13 36l-2 4" stroke="#fff" strokeWidth="4" strokeLinecap="round" /></S> },
  { bg: "#f3f3f3", dot: 1, el: <S><circle cx="25" cy="25" r="21" fill="#fbc116" /><path d="M25 25L6.800 14.500A21 21 0 0 1 43.200 14.500H25z" fill="#e33b2e" /><path d="M6.800 14.500A21 21 0 0 0 23 46l8-17-6-4z" fill="#2da94f" /><circle cx="25" cy="25" r="10" fill="#fff" /><circle cx="25" cy="25" r="8" fill="#4285f4" /></S> },
  { bg: "#20123a", dot: 1, el: <FirefoxArt /> },
  { bg: "#fff", dot: 1, el: <S><path d="M33 8l9 4v26l-9 4z" fill="#2498e3" /><path d="M33 8v9L12 34.500l-4-4zM33 42v-9L12 15.500l-4 4z" fill="#0a70bd" /></S> },
  { bg: "linear-gradient(#9650b8,#6a2f98)", dot: 1, el: <FaGithub size={44} color="#f1eef6" /> },
  { dot: 1, scale: 1.15, flat: 1, el: <S><circle cx="24" cy="24" r="18" stroke="#7fae2c" strokeWidth="10" /><path d="M20 20h8l20 24v5h-9z" fill="#5f9b3a" /><path d="M20 20h7l5 6v8l-12-6z" fill="#f2b632" /><path d="M20 20h7v10l-7-3z" fill="#ee7f2c" /></S> },
  { bg: "#1c1a1a", dot: 1, el: <FigmaMark w={24} h={36} /> },
  { bg: "conic-gradient(from 20deg,#f03a2e,#f8a21c,#e9e03a,#45c46a,#3f7df0,#a03bf0,#f0308c,#f03a2e)", dot: 1, el: <S><path d="M18 37a10 10 0 1 1 2-19 11 11 0 1 1 10 19zM17 30c-4-4 2-10 6-6l8 8c5 3 9-5 4-9-4-3-8 0-15 8" stroke="#fff" strokeWidth="3" /></S> },
  { bg: "linear-gradient(90deg,transparent 26%,#cfdcec 26% 28%,transparent 28% 74%,#cfdcec 74% 76%,transparent 76%),#eceef1", c: "#1b73e8", scale: 1.15, l: "Ar" },
  { bg: "#1f3206", c: "#8fe63a", l: "Sg" },
  { bg: "#470137", c: "#ff61f6", l: "Xd" },
  { bg: "#49021f", c: "#ff3366", dot: 1, l: "Id" },
  { bg: "#330000", c: "#ff9a00", dot: 1, l: "Ai" },
  { bg: "#001e36", c: "#31a8ff", dot: 1, l: "Ps" },
  { bg: "#00005b", c: "#9999ff", dot: 1, l: "Ae" },
  { bg: "#00005b", c: "#9999ff", l: "Pr" },
  { flat: 1, scale: 1.15, el: <S><path d="M23 6l20 15-6 6-10-9H10l2-5h14l-6-5z" fill="#ea7e12" /><path d="M3 38l22-18 5 6L7 42z" fill="#ea7e12" /><circle cx="32" cy="29" r="16" fill="#ea7e12" /><circle cx="32" cy="28" r="10" fill="#fff" /><circle cx="32" cy="28" r="6.500" fill="#265787" /></S> },
  { bg: "#b30b00", el: <S><path d="M23 10c5 0 2 12-3 20S8 42 9 37s17-11 26-9 5 6 0 5-17-13-12-23z" stroke="#fff" strokeWidth="2.600" /></S> },
  { bg: "#fff", dot: 1, el: <Office l="W" a="#41a5ee" b="#2b7cd3" c="#185abd" d="#123f8f" /> },
  { bg: "#fff", dot: 1, el: <Office l="X" a="#33c481" b="#21a366" c="#107c41" d="#0e6033" /> },
  { bg: "#fff", el: <S><circle cx="28" cy="25" r="16.500" fill="#ff8f6b" /><path d="M28 25h16.500A16.500 16.500 0 0 1 11.500 27z" fill="#d35230" /><rect x="6" y="15" width="19" height="21" rx="2" fill="#c43e1c" /><text x="15.500" y="32" fill="#fff" fontFamily="Open Sans" fontWeight="700" fontSize="17" textAnchor="middle">P</text></S> },
  { bg: "repeating-linear-gradient(#f6f6f6 0 5px,#d2d2d2 5px 6.500px)", scale: 1.05, el: <S><path d="M10 0v50" stroke="#e3a49c" /><path d="M45 2L21 49" stroke="#5e7584" strokeWidth="4" /><path d="M44 2L26 38" stroke="#c8d8e2" strokeWidth="2" /></S> },
  { bg: "linear-gradient(#8fb8ea 48%,#294a7c 48%,#5777a0 70%,#c9b8a0)", dot: 1, el: <S><rect x="1.500" y="1.500" width="47" height="47" rx="10" stroke="#eee" strokeWidth="3" /><rect x="27" y="25" width="20" height="10" rx="3" fill="#16181a" /><path d="M29 35h16l3 15H25z" fill="#bdc3c7" /></S> },
  { bg: "linear-gradient(#46494e,#0d0d0f)", el: <S><circle cx="25" cy="24" r="17" fill="#1aa8f0" stroke="#c3cad1" strokeWidth="7" /><path d="M24 27h10l10 18h-10z" fill="#c3cad1" /></S> },
  { bg: "#0b5cff", l: "zoom", font: `600 16px/46px ${UI}` },
  { bg: "#5b68ee", dot: 1, el: <FaDiscord size={36} color="#fff" /> },
];
const RECENTS = [
  { bg: "#aaabad", el: <S><path d="M14 39l11-25 12 25M37 17c-3 9-8 16-16 18-5 1-10-1-12-4" stroke="#fff" strokeWidth="11" strokeLinecap="round" strokeLinejoin="round" /><path d="M10 27c3 7 8 9 14 7M16 16c2 8 3 14 4 18" stroke="#2a1fa8" strokeWidth="7" strokeLinecap="round" /><path d="M14 39l4-9" stroke="#ff4f6e" strokeWidth="7" strokeLinecap="round" /><path d="M24 14l13 24M37 17c-2 7-5 11-9 14" stroke="#ff5c7c" strokeWidth="7" strokeLinecap="round" /></S> },
  { bg: "#fff", el: <S><text x="24" y="35" fill="#152126" fontFamily="Liberation Serif" fontStyle="italic" fontSize="42" textAnchor="middle">ff</text><path d="M19 46c4-3 7-8 9-14M27 37h8" stroke="#ef6a35" strokeWidth="2.500" /></S> },
  { bg: "#20123a", el: <FirefoxArt /> },
];
const DockApp = ({ a, w }) => (
  <DockSlot $w={w}>
    <Tile $bg={a.bg} $c={a.c} $font={a.font} $scale={a.scale} $flat={a.flat} $text={a.l}>{a.el || a.l}</Tile>
    {a.badge && <Badge $long={a.badge.length > 2}>{a.badge}</Badge>}
    {a.dot && <Dot />}
  </DockSlot>
);
const PDF_STACK = { flat: 1, el: <S><path d="M0-1h36l13 16v35H0z" fill="#eceef1" /><path d="M36-1v16h13z" fill="#c9ccd1" /><path d="M6 15h15M6 19h12M27 17h12M6 27h8M4 32h9M21 27h9v8h-9zM36 28h8v6h-8z" stroke="#9fb3e0" strokeWidth="1.500" /><text x="25" y="46" fontSize="9" fill="#666" fontFamily="Inter" textAnchor="middle">PDF</text></S> };
const TRASH = { flat: 1, scale: 1.1, el: <S><path d="M7 7h36l-4 38q-1 4-5 4H16q-4 0-5-4z" fill="#6f7374" /><path d="M14 12h6l2 34h-5zM31 12h5l-3 34h-4z" fill="#8b8f90" /><path d="M6 9l5-7 6 3 5-5 6 4 6-3 4 4 6 4-3 4H9z" fill="#e8e8e8" /><path d="M15 5l4 4M27 4l3 5M35 6l-3 4" stroke="#b5532e" strokeWidth="2" /><ellipse cx="25" cy="10" rx="18.500" ry="3" stroke="#c4c6c7" strokeWidth="1.500" /></S> };

function DockBar() {
  return (
    <Dock>
      {APPS.map((a, i) => <DockApp key={i} a={a} />)}
      <Spacer $w={14} /><DockRule /><Spacer $w={14} />
      {RECENTS.map((a, i) => <DockApp key={i} a={a} w={66} />)}
      <Spacer $w={16} /><DockRule /><Spacer $w={11} />
      <DockApp w={68} a={PDF_STACK} />
      <DockApp w={68} a={TRASH} />
    </Dock>
  );
}

const Pointer = styled.svg`
  position: absolute;
  left: 1754px;
  top: 677px;
  z-index: 5;
  filter: drop-shadow(0 2px 2px rgba(0, 0, 0, 0.4));
`;

export default function App() {
  return (
    <>
      <GlobalStyle />
      <Screen>
        <MacMenu />
        <Browser>
          <Tabs />
          <NavBar />
          <Bookmarks />
          <Notice>
            <svg width="44" height="40" viewBox="0 0 44 40" style={{ marginTop: 17 }}><path d="M22 3.500L41 36H3z" fill="none" stroke="#b06000" strokeWidth="4" /><path d="M22 15v10M22 28.500v4" stroke="#b06000" strokeWidth="4" /></svg>
            <NoticeText>If you haven't completed migration, finish setting up your Google Analytics 4 property before your connected Universal Analytics property is permanently deleted<br />on Jul 1, 2024. To maintain access to data from this property, you should download your data now.</NoticeText>
            <NoticeLink $w={166}>Dismiss</NoticeLink>
            <NoticeLink $w={199}>Learn more</NoticeLink>
            <NoticeButton>Go to Setup Assistant</NoticeButton>
          </Notice>
          <Header />
          <Body>
            <Sidebar />
            <Report />
          </Body>
        </Browser>
        <DockBar />
        <Pointer width="26" height="38" viewBox="0 0 26 38"><path d="M4 3v27l6-6 4.500 10.500 5-2L15 22h8.500z" fill="#000" stroke="#fff" strokeWidth="2" /></Pointer>
      </Screen>
    </>
  );
}
